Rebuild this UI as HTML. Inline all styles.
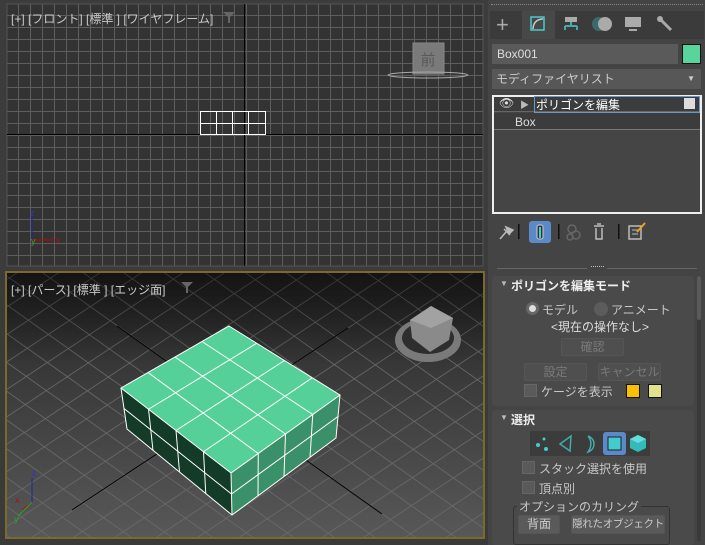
<!DOCTYPE html>
<html><head><meta charset="utf-8"><style>
*{margin:0;padding:0;box-sizing:border-box}
body{width:705px;height:545px;background:#2b2b2b;position:relative;overflow:hidden;font-family:"Liberation Sans","Noto Sans CJK JP",sans-serif;font-size:12px;color:#ddd}
.abs{position:absolute}
.lbl{position:absolute;color:#c8c8c8;font-size:12px;white-space:nowrap}
.btn{position:absolute;background:#4f4f4f;border:1px solid #555;border-radius:2px;color:#7a7a7a;text-align:center;font-size:12px;line-height:17px;white-space:nowrap;overflow:hidden}
.chk{position:absolute;width:13px;height:13px;background:#5a5a5a;border:1px solid #666}
</style></head><body>
<!-- top viewport -->
<svg class="abs" style="left:0;top:0" width="488" height="270">
<rect x="0" y="0" width="488" height="270" fill="#3c3c3c"/>
<rect x="7" y="4" width="476" height="262" fill="#333"/>
<defs><pattern id="g" x="7" y="4" width="12" height="12" patternUnits="userSpaceOnUse">
<path d="M11.5 0V12M0 11.5H12" stroke="#5e5e5e" stroke-width="1"/></pattern></defs>
<rect x="7" y="4" width="476" height="262" fill="url(#g)"/>
<rect x="7" y="4" width="476" height="262" fill="none" stroke="#555" stroke-width="1"/>
<line x1="244.5" y1="4" x2="244.5" y2="266" stroke="#000"/>
<line x1="7" y1="134.5" x2="483" y2="134.5" stroke="#000"/>
<rect x="200.5" y="111.5" width="65" height="23" fill="none" stroke="#fff"/>
<path d="M216.5 111v23M232.5 111v23M248.5 111v23M200 123.5h65" stroke="#fff"/>
<rect x="413" y="43" width="31" height="31" fill="#7a7a7a" stroke="#888"/>
<text x="428" y="65" fill="#5a5a5a" font-size="15" text-anchor="middle" font-family="Noto Sans CJK JP">前</text>
<ellipse cx="428" cy="75" rx="40" ry="3" fill="none" stroke="#aaa"/>
<line x1="32" y1="216" x2="32" y2="240" stroke="#22a"/>
<line x1="32" y1="240" x2="55" y2="240" stroke="#c00"/>
<text x="30" y="216" fill="#33c" font-size="9">z</text>
<text x="56" y="243" fill="#a11" font-size="9">x</text>
<text x="31" y="244" fill="#2a2" font-size="9">y</text>
</svg>
<div class="lbl" style="left:11px;top:10px">[+] [フロント] [標準 ] [ワイヤフレーム]</div>
<svg class="abs" style="left:223px;top:12px" width="12" height="11"><path d="M0 0h12L7 5v6H5V5z" fill="#666"/></svg>
<!-- bottom viewport -->
<svg class="abs" style="left:0;top:270px" width="488" height="275">
<defs>
<linearGradient id="bg" x1="0" y1="0" x2="0" y2="1"><stop offset="0" stop-color="#262626"/><stop offset="1" stop-color="#585858"/></linearGradient>
<pattern id="pg" patternUnits="userSpaceOnUse" width="1" height="1" patternTransform="matrix(21,-13.9,20,14.2,229.6,136)">
<path d="M0 0V1M0 0H1" stroke="#6a6a6a" stroke-width="0.07"/></pattern>
<linearGradient id="fade" x1="0" y1="0" x2="0" y2="1"><stop offset="0" stop-color="#000" stop-opacity="0.5"/><stop offset="0.35" stop-color="#000" stop-opacity="0"/></linearGradient>
</defs>
<rect x="0" y="0" width="488" height="275" fill="#3a3a3a"/>
<rect x="6" y="2" width="478" height="266" fill="url(#bg)"/>
<rect x="6" y="2" width="478" height="266" fill="url(#pg)"/>
<rect x="6" y="2" width="478" height="266" fill="url(#fade)"/>
<line x1="72" y1="240" x2="348" y2="58" stroke="#000"/>
<line x1="117" y1="56" x2="382" y2="244" stroke="#000"/>
<rect x="6" y="2" width="478" height="266" fill="none" stroke="#7c6a2a" stroke-width="2"/>
<polygon points="121,118 231,203 232,245 127,159" fill="#143a28"/>
<polygon points="231,203 340,125 336,168 232,245" fill="#3a9068"/>
<polygon points="229,56 340,125 231,203 121,118" fill="#55d098"/>
<g stroke="#fff" stroke-width="1" fill="none">
<polygon points="229,56 340,125 231,203 121,118"/>
<path d="M256.75,73.25 L148.5,139.25 M284.5,90.5 L176,160.5 M312.25,107.75 L203.5,181.75"/>
<path d="M202,71.5 L312.75,144.5 M175,87 L285.5,164 M148,102.5 L258.25,183.5"/>
<path d="M121,118 L127,159 L232,245 L336,168 L340,125 M231,203 L232,245"/>
<path d="M124,138.5 L231.5,224 L338,146.5"/>
<path d="M148.5,139 L153,180.5 M176,160.5 L179.5,202 M203.5,181.75 L205.75,223.5"/>
<path d="M258.25,183.5 L258,225.75 M285.5,164 L284,206.5 M312.75,144.5 L310,187.25"/>
</g>
<ellipse cx="428" cy="70" rx="33" ry="22" fill="#7a7a7a"/>
<ellipse cx="428" cy="68" rx="26" ry="16" fill="#2e2e2e"/>
<polygon points="431,36 453,48 449,70 430,82 412,68 410,50" fill="#8a8a8a"/>
<polygon points="431,36 453,48 431,58 410,50" fill="#a2a2a2"/>
<line x1="22" y1="240" x2="32" y2="232" stroke="#c00"/><line x1="32" y1="232" x2="32" y2="208" stroke="#22a"/><line x1="32" y1="232" x2="18" y2="246" stroke="#2a2"/>
<text x="32" y="206" fill="#33c" font-size="9">z</text><text x="15" y="233" fill="#a11" font-size="9">x</text><text x="14" y="252" fill="#2a2" font-size="9">y</text>
</svg>
<div class="lbl" style="left:11px;top:281px">[+] [パース] [標準 ] [エッジ面]</div>
<svg class="abs" style="left:181px;top:282px" width="12" height="11"><path d="M0 0h12L7 5v6H5V5z" fill="#666"/></svg>
<!-- right panel -->
<div class="abs" style="left:488px;top:0;width:217px;height:545px;background:#444"></div>
<div class="abs" style="left:491px;top:4px;width:212px;border-top:1px dotted #888"></div>
<div class="abs" style="left:490px;top:11px;width:214px;height:28px;background:#3b3b3b"></div>
<div class="abs" style="left:522px;top:11px;width:33px;height:28px;background:#484848"></div>
<div class="abs" style="left:496px;top:16px;font-size:22px;color:#aaa;line-height:18px">+</div>
<svg class="abs" style="left:529px;top:15px" width="18" height="18"><rect x="2" y="2" width="13" height="13" fill="none" stroke="#4cc" stroke-width="1.5"/><path d="M4 14C4 8 8 4 14 4" stroke="#ccc" fill="none" stroke-width="1.5"/></svg>
<svg class="abs" style="left:562px;top:15px" width="18" height="18"><rect x="3" y="2" width="12" height="5" fill="#aaa"/><path d="M9 7v4M3 11h12M3 11v4M15 11v4" stroke="#4aa" stroke-width="2"/></svg>
<svg class="abs" style="left:592px;top:15px" width="22" height="18"><circle cx="7" cy="9" r="7" fill="#3a6a6a"/><circle cx="13" cy="9" r="7" fill="#aaa"/></svg>
<svg class="abs" style="left:624px;top:15px" width="18" height="18"><rect x="1" y="2" width="16" height="10" fill="#aaa"/><rect x="5" y="14" width="8" height="2" fill="#aaa"/></svg>
<svg class="abs" style="left:656px;top:15px" width="18" height="18"><path d="M3 3L15 15" stroke="#aaa" stroke-width="3"/><circle cx="4" cy="4" r="3" fill="#aaa"/></svg>
<div class="abs" style="left:492px;top:44px;width:186px;height:20px;background:#5a5a5a;color:#ddd;line-height:20px;padding-left:5px">Box001</div>
<div class="abs" style="left:682px;top:44px;width:19px;height:20px;background:#58d59c;border:1px solid #111"></div>
<div class="abs" style="left:492px;top:69px;width:209px;height:20px;background:#575757;color:#ccc;line-height:20px;padding-left:4px">モディファイヤリスト<span style="position:absolute;right:6px;font-size:8px">▼</span></div>
<div class="abs" style="left:492px;top:95px;width:210px;height:119px;border:2px solid #eee;background:#454545"></div>
<div class="abs" style="left:494px;top:97px;width:206px;height:15px;background:#3c3c3c;border-bottom:1px solid #666"></div>
<div class="abs" style="left:534px;top:96px;width:166px;height:17px;border:1px solid #69c"></div>
<div class="abs" style="left:499px;top:96px;color:#ddd;font-size:12px">👁</div>
<div class="abs" style="left:520px;top:98px;color:#bbb;font-size:9px">▶</div>
<div class="abs" style="left:536px;top:96px;color:#fff">ポリゴンを編集</div>
<div class="abs" style="left:684px;top:98px;width:11px;height:11px;background:#ddd"></div>
<div class="abs" style="left:494px;top:113px;width:206px;height:17px;background:#3c3c3c;border-bottom:1px solid #777"></div>
<div class="abs" style="left:515px;top:115px;color:#ddd">Box</div>
<svg class="abs" style="left:496px;top:221px" width="150" height="22">
<path d="M4 18L10 11M8 8l6 6M10 6l7 3-4 4z" stroke="#bbb" stroke-width="1.5" fill="#bbb"/>
<rect x="22" y="3" width="1.5" height="15" fill="#111"/>
<rect x="33" y="0" width="22" height="22" rx="3" fill="#5b8acb"/><rect x="41" y="4" width="6" height="14" rx="2" fill="#333" stroke="#ccc"/><rect x="43" y="6" width="2" height="11" fill="#4cc"/>
<rect x="62" y="3" width="1.5" height="15" fill="#111"/>
<circle cx="76" cy="8" r="4" fill="none" stroke="#666" stroke-width="1.5"/><circle cx="80" cy="14" r="4" fill="none" stroke="#666" stroke-width="1.5"/><circle cx="74" cy="16" r="3" fill="none" stroke="#666" stroke-width="1.5"/>
<path d="M98 5h10M101 3h4M100 7v11h6V7" stroke="#bbb" fill="none" stroke-width="1.5"/>
<rect x="122" y="3" width="1.5" height="15" fill="#111"/>
<rect x="133" y="5" width="12" height="13" fill="none" stroke="#bbb" stroke-width="1.5"/><path d="M136 9h6M136 13h6" stroke="#bbb"/><path d="M141 11L149 2" stroke="#f0a020" stroke-width="2"/>
</svg>
<div class="abs" style="left:497px;top:268px;width:90px;border-top:1px solid #666"></div>
<div class="abs" style="left:607px;top:268px;width:90px;border-top:1px solid #666"></div>
<div class="abs" style="left:591px;top:266px;width:13px;border-top:1px dotted #bbb"></div>
<div class="abs" style="left:492px;top:276px;width:202px;height:130px;background:#4a4a4a;border-radius:3px"></div>
<div class="abs" style="left:697px;top:276px;width:4px;height:265px;background:#3a3a3a"></div>
<div class="abs" style="left:697px;top:276px;width:4px;height:44px;background:#5a5a5a;border-radius:2px"></div>
<div class="lbl" style="left:500px;top:279px;font-size:8px;color:#bbb">▼</div>
<div class="lbl" style="left:511px;top:277px;font-weight:bold;color:#eee">ポリゴンを編集モード</div>
<div class="abs" style="left:526px;top:302px;width:13px;height:13px;border-radius:50%;background:#ddd;border:3px solid #666"></div>
<div class="lbl" style="left:542px;top:301px">モデル</div>
<div class="abs" style="left:594px;top:302px;width:14px;height:14px;border-radius:50%;background:#5c5c5c"></div>
<div class="lbl" style="left:611px;top:301px">アニメート</div>
<div class="lbl" style="left:551px;top:318px;color:#ddd">&lt;現在の操作なし&gt;</div>
<div class="btn" style="left:561px;top:338px;width:63px;height:18px">確認</div>
<div class="btn" style="left:524px;top:363px;width:63px;height:18px">設定</div>
<div class="btn" style="left:598px;top:363px;width:63px;height:18px">キャンセル</div>
<div class="chk" style="left:524px;top:384px"></div>
<div class="lbl" style="left:541px;top:383px">ケージを表示</div>
<div class="abs" style="left:626px;top:384px;width:14px;height:14px;background:#f8c000;border:1px solid #111"></div>
<div class="abs" style="left:648px;top:384px;width:14px;height:14px;background:#e2e28a;border:1px solid #111"></div>
<div class="abs" style="left:492px;top:410px;width:202px;height:135px;background:#4a4a4a;border-radius:3px"></div>
<div class="lbl" style="left:500px;top:413px;font-size:8px;color:#bbb">▼</div>
<div class="lbl" style="left:511px;top:411px;font-weight:bold;color:#eee">選択</div>
<svg class="abs" style="left:530px;top:431px" width="120" height="25">
<rect x="0" y="0" width="120" height="25" fill="#3c3c3c"/>
<circle cx="8" cy="14" r="2" fill="#4cc"/><circle cx="14" cy="8" r="1.5" fill="#4cc"/><circle cx="16" cy="18" r="2" fill="#4cc"/>
<path d="M41 5L30 13L40 20z" fill="none" stroke="#4aa" stroke-width="1.5"/>
<path d="M58 5C66 8 66 18 58 21C62 15 62 10 58 5" fill="none" stroke="#4aa" stroke-width="1.5"/>
<rect x="73" y="1" width="23" height="23" rx="3" fill="#5b8acb"/><rect x="78" y="6" width="13" height="13" fill="#4cc" stroke="#222"/>
<path d="M100 8L108 4L116 8V17L108 21L100 17z" fill="#3bb"/><path d="M100 8L108 12L116 8L108 4z" fill="#6dd"/>
</svg>
<div class="chk" style="left:522px;top:461px"></div>
<div class="lbl" style="left:539px;top:460px">スタック選択を使用</div>
<div class="chk" style="left:522px;top:481px"></div>
<div class="lbl" style="left:539px;top:480px">頂点別</div>
<div class="abs" style="left:513px;top:506px;width:157px;height:39px;border:1px solid #333;border-radius:3px"></div>
<div class="lbl" style="left:517px;top:498px;background:#4a4a4a;padding:0 2px">オプションのカリング</div>
<div class="btn" style="left:518px;top:515px;width:42px;height:19px;color:#ccc;background:#5a5a5a">背面</div>
<div class="btn" style="left:571px;top:515px;width:94px;height:19px;color:#ccc;background:#5a5a5a;font-size:10.5px;letter-spacing:-0.3px">隠れたオブジェクト</div>
</body></html>
